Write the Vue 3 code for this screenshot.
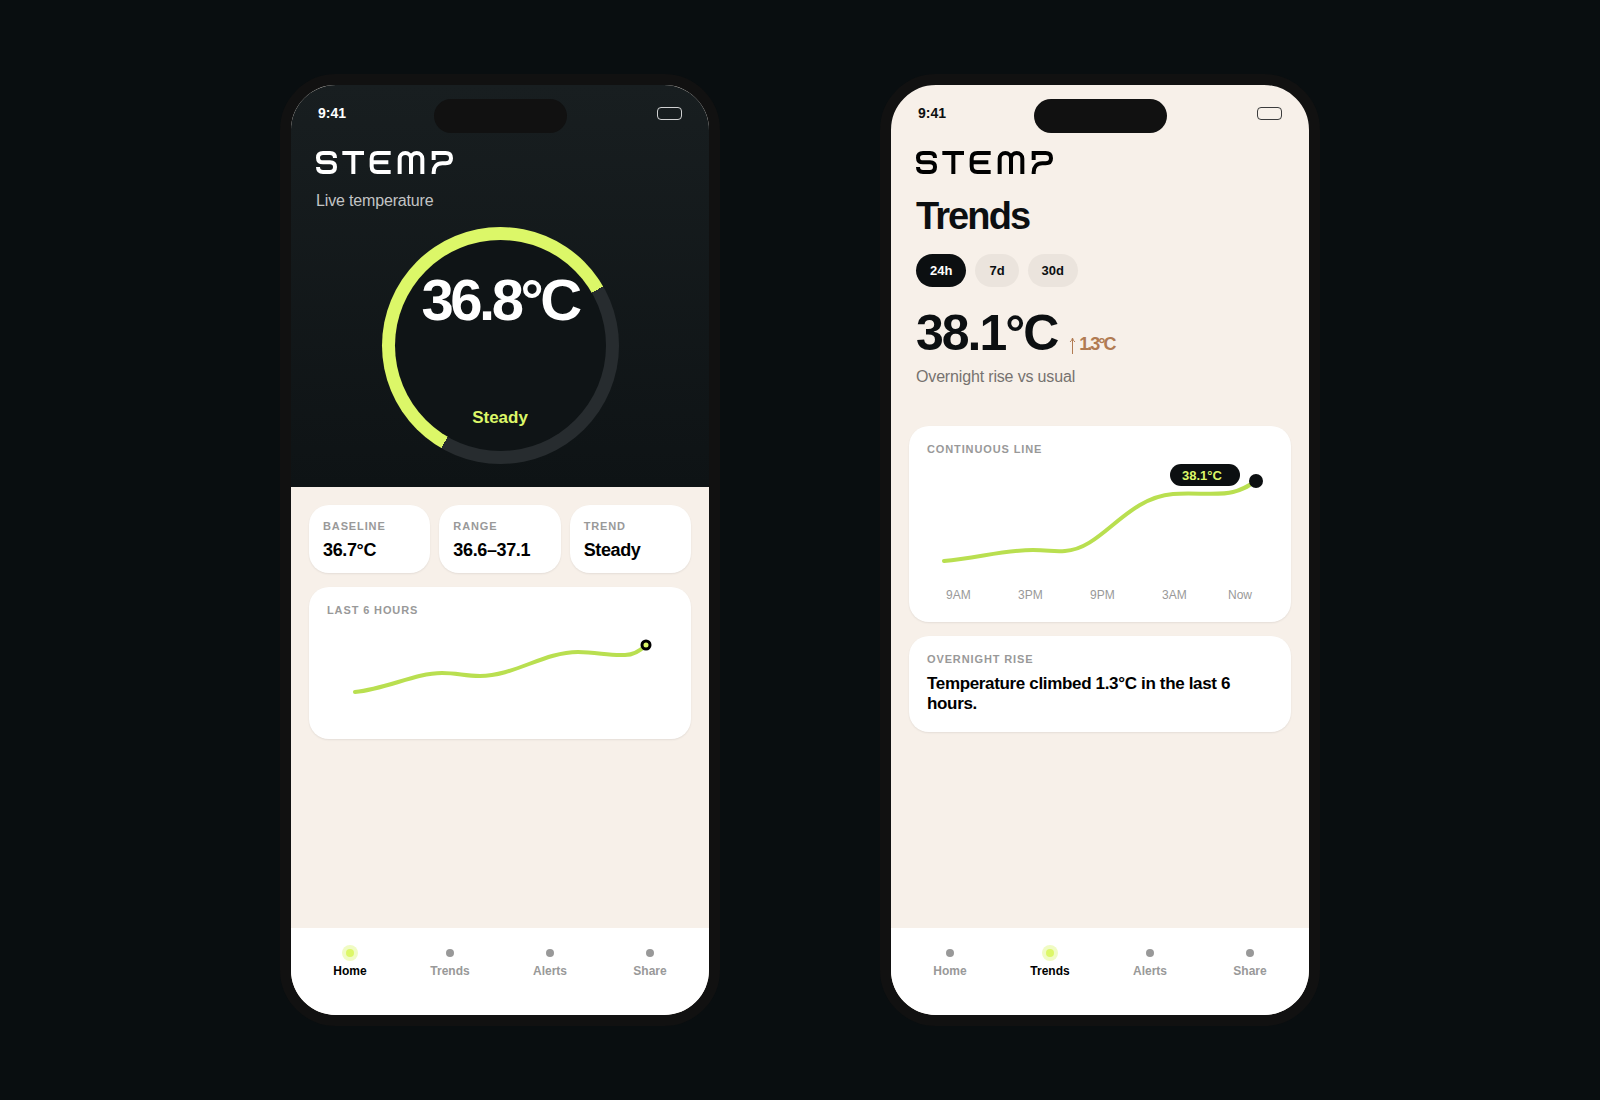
<script setup>
import { ref } from 'vue'

const tabs = ['Home', 'Trends', 'Alerts', 'Share']
const stats = [
  { label: 'Baseline', value: '36.7°C' },
  { label: 'Range', value: '36.6–37.1' },
  { label: 'Trend', value: 'Steady' },
]
const ranges = ['24h', '7d', '30d']
const range = ref('24h')
const hours = [
  { label: '9AM', x: 19 },
  { label: '3PM', x: 91 },
  { label: '9PM', x: 163 },
  { label: '3AM', x: 235 },
  { label: 'Now', x: 301 },
]
const screens = ['Home', 'Trends']
</script>

<template>
  <main class="stage">
    <section
      v-for="screen in screens"
      :key="screen"
      class="phone"
      :class="{ dark: screen === 'Home' }"
      :aria-label="screen"
    >
      <div class="island"></div>
      <header class="top">
        <div class="status">
          <span>9:41</span>
          <span class="battery"></span>
        </div>
        <svg class="logo" viewBox="0 0 411 69" role="img" aria-label="Stemp">
          <g fill="none" stroke="currentColor" stroke-width="12">
            <path d="M57 21Q57 6 42 6H21Q6 6 6 20Q6 34 21 34H42Q57 34 57 48Q57 63 42 63H21Q6 63 6 48" />
            <path d="M79 6H144M112 6V69" />
            <path d="M224 6H184Q167 6 167 23V46Q167 63 184 63H224M167 34H217" />
            <path d="M251 69V23A17 17 0 0 1 285 23V69M285 23A17 17 0 0 1 319 23V69" />
            <path d="M353 27V6H389Q405 6 405 22Q405 37 389 37H379C362 37 353 48 353 64V69" />
          </g>
        </svg>

        <template v-if="screen === 'Home'">
          <p class="sub">Live temperature</p>
          <div class="ring">
            <div class="dial">
              <strong class="now">36.8°C</strong>
              <span class="state">Steady</span>
            </div>
          </div>
        </template>

        <template v-else>
          <h1>Trends</h1>
          <div class="pills">
            <button
              v-for="r in ranges"
              :key="r"
              type="button"
              :class="{ on: r === range }"
              @click="range = r"
            >{{ r }}</button>
          </div>
          <p class="reading">
            38.1°C
            <span class="delta">
              <svg class="arrow" viewBox="0 0 14 34" role="img" aria-label="up">
                <path d="M7 34V3M2 10Q6 7 7 2Q8 7 12 10" fill="none" stroke="currentColor" stroke-width="2" />
              </svg>
              1.3°C
            </span>
          </p>
          <p class="sub">Overnight rise vs usual</p>
        </template>
      </header>

      <div v-if="screen === 'Home'" class="content">
        <div class="stats">
          <article v-for="s in stats" :key="s.label" class="card stat">
            <h2>{{ s.label }}</h2>
            <p class="value">{{ s.value }}</p>
          </article>
        </div>
        <article class="card">
          <h2>Last 6 hours</h2>
          <svg class="chart" viewBox="0 0 346 100" aria-hidden="true">
            <path class="line" d="M28 71C60 68 88 52 115 52C131 52 137 55 153 55C187 55 217 31 251 31C270 31 282 35 298 34C308 34 314 29 319 24" />
            <circle class="point" cx="319" cy="24" r="4" />
          </svg>
        </article>
      </div>

      <div v-else class="content">
        <article class="card">
          <h2>Continuous line</h2>
          <svg class="chart" viewBox="0 0 346 144">
            <path class="line" d="M17 101C50 98 78 90 106 90C122 90 126 92 138 91C175 89 198 38 246 34C266 32 292 36 306 32C315 30 320 27 329 21" />
            <rect class="tag" x="243" y="4" width="70" height="22" rx="11" />
            <text class="tag-text" x="255" y="20">38.1°C</text>
            <circle class="tag" cx="329" cy="21" r="7" />
            <text v-for="h in hours" :key="h.label" class="tick" :x="h.x" y="139">{{ h.label }}</text>
          </svg>
        </article>
        <article class="card">
          <h2>Overnight rise</h2>
          <p class="note">Temperature climbed 1.3°C in the last 6 hours.</p>
        </article>
      </div>

      <nav class="tabs">
        <a v-for="t in tabs" :key="t" href="#" :class="{ active: t === screen }" @click.prevent>
          <span class="dot"></span>{{ t }}
        </a>
      </nav>
    </section>
  </main>
</template>

<style>
body {
  background: #090e10;
}
</style>

<style scoped>
.stage {
  min-height: 100vh;
  box-sizing: border-box;
  padding: 32px 0;
  display: flex;
  flex-wrap: wrap;
  justify-content: center;
  align-items: center;
  gap: 32px 160px;
  background: #090e10;
  color: #0c0f11;
  font-family: "Liberation Sans", Arial, sans-serif;
}

.phone {
  position: relative;
  box-sizing: border-box;
  width: 100%;
  max-width: 440px;
  min-height: 952px;
  border: 11px solid #111;
  border-radius: 56px;
  overflow: hidden;
  display: flex;
  flex-direction: column;
  background: #f7f0e9;
}

.island {
  position: absolute;
  top: 14px;
  left: 50%;
  width: 133px;
  height: 34px;
  margin-left: -66px;
  border-radius: 17px;
  background: #111;
}

.top {
  display: flex;
  flex-direction: column;
  padding: 0 25px 21px;
}

.dark .top {
  padding-bottom: 23px;
  color: #fff;
  background: linear-gradient(#181e20, #0e1315);
}

.status {
  display: flex;
  justify-content: space-between;
  align-items: center;
  height: 56px;
  padding: 0 2px;
  font-size: 14px;
  font-weight: 700;
}

.battery {
  box-sizing: border-box;
  width: 25px;
  height: 13px;
  border: 1px solid currentColor;
  border-radius: 4px;
  opacity: 0.8;
}

.logo {
  width: 137px;
  height: 23px;
  margin-top: 10px;
  color: #000;
}

.dark .logo {
  color: #fff;
}

p,
h1,
h2 {
  margin: 0;
}

.sub {
  margin-top: 17px;
  font-size: 16px;
  line-height: 20px;
  letter-spacing: -0.01em;
  color: #76726f;
}

.dark .sub {
  color: #c2c4c5;
}

.ring {
  box-sizing: border-box;
  width: 237px;
  height: 237px;
  margin-top: 16px;
  padding: 13px;
  align-self: center;
  border-radius: 50%;
  background: conic-gradient(from 210deg, #dcf768 210deg, #272c2f 0);
}

.dial {
  box-sizing: border-box;
  height: 100%;
  padding: 31px 0 23px;
  display: flex;
  flex-direction: column;
  align-items: center;
  justify-content: space-between;
  border-radius: 50%;
  background: #0f1416;
}

.now {
  font-size: 58px;
  line-height: 58px;
  letter-spacing: -0.06em;
}

.state {
  font-size: 17px;
  line-height: 20px;
  font-weight: 700;
  color: #dcf768;
}

h1 {
  margin-top: 20px;
  font-size: 38px;
  line-height: 44px;
  letter-spacing: -0.05em;
}

.pills {
  display: flex;
  gap: 9px;
  margin-top: 16px;
}

.pills button {
  height: 33px;
  padding: 0 14px;
  border: 0;
  border-radius: 17px;
  background: #ebe4dd;
  color: inherit;
  font: 700 13px "Liberation Sans", Arial, sans-serif;
}

.pills .on {
  background: #0c0f11;
  color: #fff;
}

.reading {
  margin-top: 18px;
  font-size: 50px;
  line-height: 56px;
  font-weight: 700;
  letter-spacing: -2px;
}

.delta {
  font-size: 18px;
  line-height: 20px;
  color: #b17b52;
}

.arrow {
  width: 7px;
  height: 17px;
  vertical-align: -4px;
}

.reading + .sub {
  margin-top: 6px;
}

.content {
  flex: 1;
  display: flex;
  flex-direction: column;
  gap: 14px;
  padding: 18px;
}

.stats {
  display: grid;
  grid-template-columns: repeat(3, 1fr);
  gap: 9px;
}

.card {
  padding: 15px 18px 18px;
  border-radius: 20px;
  background: #fff;
  box-shadow: 0 1px 2px rgb(0 0 0 / 8%);
}

.stat {
  padding: 13px 14px;
}

h2 {
  margin-bottom: 3px;
  font-size: 11px;
  line-height: 16px;
  letter-spacing: 0.08em;
  text-transform: uppercase;
  color: #999;
}

.value {
  margin-top: 6px;
  font-size: 18px;
  line-height: 20px;
  font-weight: 700;
  letter-spacing: -0.02em;
  color: #000;
}

.chart {
  display: block;
  width: 100%;
}

.line {
  fill: none;
  stroke: #b9df50;
  stroke-width: 4;
  stroke-linecap: round;
}

.point {
  fill: #dcf768;
  stroke: #000;
  stroke-width: 3;
}

.tag {
  fill: #0c0f11;
}

.tag-text {
  fill: #dcf768;
  font-size: 13px;
  font-weight: 700;
}

.tick {
  fill: #999;
  font-size: 12px;
}

.note {
  margin-top: 7px;
  font-size: 17px;
  line-height: 20px;
  font-weight: 700;
  letter-spacing: -0.02em;
  color: #000;
}

.tabs {
  box-sizing: border-box;
  height: 87px;
  display: grid;
  grid-template-columns: repeat(4, 1fr);
  padding: 21px 9px 0;
  background: #fff;
}

.tabs a {
  display: flex;
  flex-direction: column;
  align-items: center;
  gap: 6px;
  font-size: 12px;
  line-height: 16px;
  font-weight: 700;
  color: #999;
  text-decoration: none;
}

.tabs .active {
  color: #000;
}

.dot {
  width: 8px;
  height: 8px;
  border-radius: 50%;
  background: #999;
}

.active .dot {
  background: #dcf768;
  box-shadow: 0 0 0 4px #f0fbc4;
}
</style>
